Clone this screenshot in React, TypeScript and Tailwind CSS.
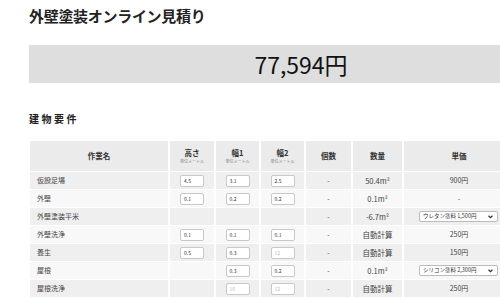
import React from "react";

type Cell = { value?: string; placeholder?: string } | null;

type Row = {
  name: string;
  h: Cell;
  w1: Cell;
  w2: Cell;
  count: string;
  qty: string;
  price?: string;
  select?: string;
};

const rows: Row[] = [
  { name: "仮設足場", h: { value: "4.5" }, w1: { value: "3.1" }, w2: { value: "2.5" }, count: "-", qty: "50.4m²", price: "900円" },
  { name: "外壁", h: { value: "0.1" }, w1: { value: "0.2" }, w2: { value: "0.2" }, count: "-", qty: "0.1m²", price: "-" },
  { name: "外壁塗装平米", h: null, w1: null, w2: null, count: "-", qty: "-6.7m²", select: "ウレタン塗料 1,500円" },
  { name: "外壁洗浄", h: { value: "0.1" }, w1: { value: "0.1" }, w2: { value: "0.1" }, count: "-", qty: "自動計算", price: "250円" },
  { name: "養生", h: { value: "0.5" }, w1: { value: "0.3" }, w2: { placeholder: "12" }, count: "-", qty: "自動計算", price: "150円" },
  { name: "屋根", h: null, w1: { value: "0.3" }, w2: { value: "0.2" }, count: "-", qty: "0.1m²", select: "シリコン塗料 2,300円" },
  { name: "屋根洗浄", h: null, w1: { placeholder: "10" }, w2: { placeholder: "12" }, count: "-", qty: "自動計算", price: "250円" },
];

const gridCols = "grid grid-cols-[138px_44px_43px_43px_45px_49px_110px] gap-x-[2px]";

const SmallInput = ({ cell }: { cell: Cell }) => {
  if (!cell) return null;
  return (
    <div className="w-[24px] h-[12px] bg-white border border-[#c8c8c8] rounded-[2px] flex items-center pl-[3px] text-[5px] leading-none">
      {cell.value ? (
        <span className="text-[#333]">{cell.value}</span>
      ) : (
        <span className="text-[#bbb]">{cell.placeholder}</span>
      )}
    </div>
  );
};

const HeadCell = ({ title, sub }: { title: string; sub?: string }) => (
  <div className="bg-[#ebebeb] flex flex-col items-center justify-center">
    <span className="text-[7.5px] font-bold text-[#333] leading-none">{title}</span>
    {sub && <span className="text-[4px] text-[#888] leading-none mt-[3px]">{sub}</span>}
  </div>
);

export default function App() {
  return (
    <div
      className="w-[500px] h-[300px] overflow-hidden bg-white text-[#222]"
      style={{ fontFamily: '"Noto Sans CJK JP", "Noto Sans", sans-serif' }}
    >
      <div className="pl-[29px] pt-[7px]">
        <h1 className="text-[15px] font-bold leading-[18px] tracking-[-0.3px]">外壁塗装オンライン見積り</h1>

        <div className="mt-[20px] w-[544px] h-[38px] bg-[#dedede] flex items-center justify-center">
          <span className="text-[23px] leading-none text-[#111]">77,594円</span>
        </div>

        <h2 className="mt-[31px] text-[10px] font-bold leading-none tracking-[2.5px]">建物要件</h2>

        <div className="mt-[17px] ml-[1px] flex flex-col gap-y-px">
          <div className={`${gridCols} h-[30px]`}>
            <HeadCell title="作業名" />
            <HeadCell title="高さ" sub="単位メートル" />
            <HeadCell title="幅1" sub="単位メートル" />
            <HeadCell title="幅2" sub="単位メートル" />
            <HeadCell title="個数" />
            <HeadCell title="数量" />
            <HeadCell title="単価" />
          </div>
          {rows.map((r, i) => {
            const bg = i % 2 === 0 ? "bg-[#efefef]" : "bg-[#f8f8f8]";
            return (
              <div key={r.name} className={`${gridCols} h-[17px] text-[7px] text-[#444]`}>
                <div className={`${bg} flex items-center pl-[7px]`}>{r.name}</div>
                <div className={`${bg} flex items-center justify-center`}>
                  <SmallInput cell={r.h} />
                </div>
                <div className={`${bg} flex items-center justify-center`}>
                  <SmallInput cell={r.w1} />
                </div>
                <div className={`${bg} flex items-center justify-center`}>
                  <SmallInput cell={r.w2} />
                </div>
                <div className={`${bg} flex items-center justify-center`}>{r.count}</div>
                <div className={`${bg} flex items-center justify-center text-[7.5px]`}>{r.qty}</div>
                {r.select ? (
                  <div className={`${bg} flex items-center pl-[15px]`}>
                    <div className="w-[79px] h-[11px] bg-white border border-[#bbb] rounded-[2px] flex items-center justify-between pl-[3px] pr-[4px]">
                      <span className="text-[5.5px] leading-none text-[#333] whitespace-nowrap">{r.select}</span>
                      <svg width="5" height="4" viewBox="0 0 10 8" className="shrink-0">
                        <path d="M1 1.5 L5 5.5 L9 1.5" stroke="#333" strokeWidth="2.4" fill="none" />
                      </svg>
                    </div>
                  </div>
                ) : (
                  <div className={`${bg} flex items-center justify-center`}>{r.price}</div>
                )}
              </div>
            );
          })}
        </div>
      </div>
    </div>
  );
}
